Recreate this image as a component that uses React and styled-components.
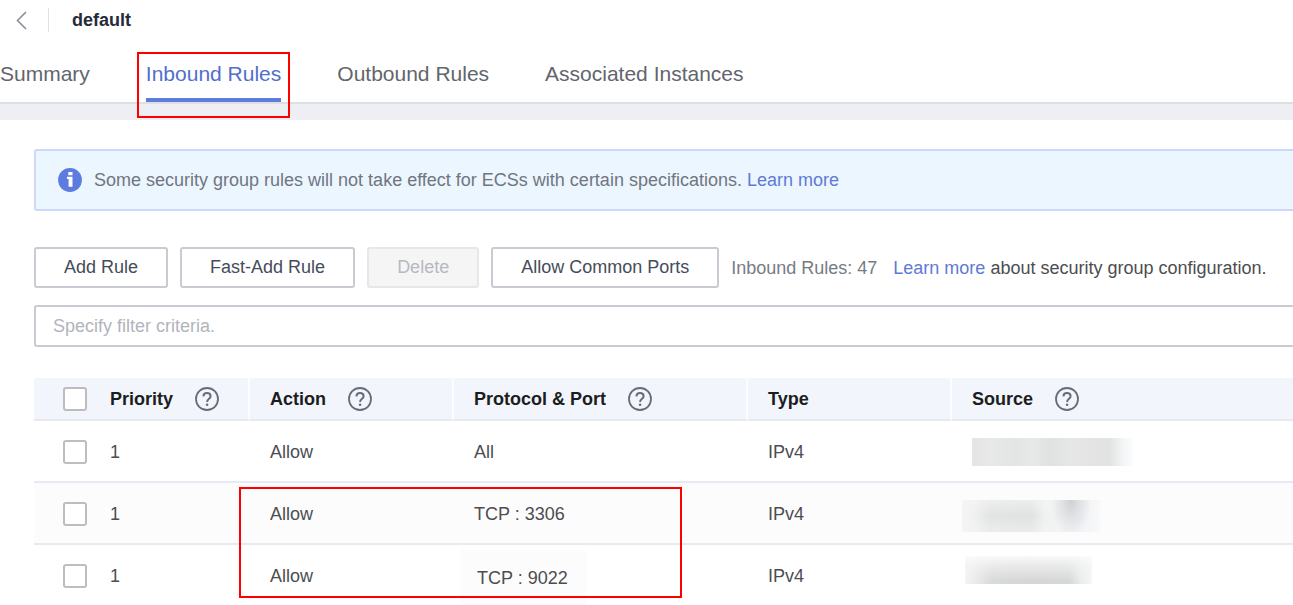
import React from "react";
import styled, { createGlobalStyle } from "styled-components";

const GlobalStyle = createGlobalStyle`
  * { box-sizing: border-box; }
  html, body, #root { height: 100%; }
  body {
    margin: 0;
    overflow: hidden;
    background: #fff;
    color: #4b4d52;
    font-family: "Liberation Sans", Arial, sans-serif;
    font-size: 18px;
    line-height: 24px;
  }
`;

const Page = styled.div`
  min-height: 100%;
  background: #fff;
`;

const TitleBar = styled.header`
  display: flex;
  align-items: center;
  height: 40px;
  padding-left: 16px;
`;

const BackButton = styled.button`
  display: flex;
  padding: 0;
  border: 0;
  background: none;
  color: #8a8e99;
`;

const Divider = styled.span`
  width: 1px;
  height: 24px;
  margin: 0 23px 0 20px;
  background: #dfe1e6;
`;

const Title = styled.h1`
  margin: 0;
  color: #252b3a;
  font-size: 18px;
  line-height: 24px;
`;

const Tabs = styled.nav`
  display: flex;
  gap: 56px;
  height: 64px;
  padding-top: 18px;
  border-bottom: 2px solid #dfdfe2;
`;

const Tab = styled.a`
  position: relative;
  height: 44px;
  padding-top: 4px;
  border-bottom: 4px solid ${(p) => (p.$active ? "#5e7ce0" : "transparent")};
  color: ${(p) => (p.$active ? "#526ecc" : "#62656d")};
  font-size: 21px;
  text-decoration: none;
  white-space: nowrap;
`;

const TabMarker = styled.span`
  position: absolute;
  inset: -6px -9px -20px;
  border: 2px solid #f00;
  pointer-events: none;
`;

const Band = styled.div`
  height: 16px;
  background: #eeeff4;
  border-bottom: 1px solid #f0f0f3;
`;

const Main = styled.main`
  padding: 29px 0 0 34px;
`;

const Notice = styled.div`
  display: flex;
  align-items: center;
  gap: 12px;
  height: 62px;
  padding-left: 22px;
  border: 2px solid #cbd8fa;
  border-right: 0;
  border-radius: 3px 0 0 3px;
  background: #ebf6ff;
  color: #71757f;
`;

const Link = styled.a`
  color: #6179d6;
  text-decoration: none;
`;

const Toolbar = styled.div`
  display: flex;
  align-items: center;
  gap: 12px;
  margin: 36px 0 17px;
  white-space: nowrap;
`;

const Button = styled.button`
  height: 41px;
  padding: 0 28px 2px;
  border: 2px solid #c9cbd2;
  border-radius: 3px;
  background: #fff;
  color: #464c59;
  font: inherit;

  &:disabled {
    border-color: #e6e7ea;
    background: #f5f5f5;
    color: #b6b9c1;
  }
`;

const Count = styled.span`
  margin-right: 4px;
  color: #777b84;
`;

const Filter = styled.input`
  display: block;
  width: 100%;
  height: 42px;
  padding: 0 17px;
  border: 2px solid #c9cbd2;
  border-right: 0;
  border-radius: 3px 0 0 3px;
  background: #fff;
  font: inherit;

  &::placeholder { color: #b1b4bd; opacity: 1; }
`;

const TableArea = styled.div`
  position: relative;
  margin-top: 31px;
`;

const Table = styled.table`
  width: 100%;
  table-layout: fixed;
  border-collapse: separate;
  border-spacing: 0;
`;

const Col = styled.col`
  width: ${(p) => (p.$w ? `${p.$w}px` : "auto")};
`;

const HeadCell = styled.th`
  height: 43px;
  padding: 0 0 0 20px;
  border-bottom: 2px solid #e7e9ee;
  border-right: ${(p) => (p.$divided ? "2px solid #fbfcff" : "0")};
  background: #f2f5fc;
  color: #1c1d21;
  text-align: left;
  white-space: nowrap;
`;

const HeadLabel = styled.span`
  display: flex;
  align-items: center;
  gap: 22px;
`;

const Row = styled.tr`
  background: ${(p) => (p.$shaded ? "#fcfcfc" : "#fff")};
`;

const Cell = styled.td`
  position: relative;
  height: 62px;
  padding: 2px 0 0 20px;
  border-bottom: 2px solid #e7eaf2;
`;

const CheckHead = styled(HeadCell)`
  padding-left: 29px;
  border-radius: 3px 0 0 0;
`;

const CheckCell = styled(Cell)`
  padding-left: 29px;
`;

const Checkbox = styled.input`
  display: block;
  appearance: none;
  width: 24px;
  height: 24px;
  margin: 0;
  border: 2px solid #bdbdbf;
  border-radius: 3px;
  background: #fff;
`;

const PortPatch = styled.span`
  position: absolute;
  left: 6px;
  top: 5px;
  width: 126px;
  height: 56px;
  padding: 16px 0 0 17px;
  background: #fcfcfc;
`;

const Mask = styled.span`
  position: absolute;
  left: ${(p) => p.$left}px;
  top: ${(p) => p.$top}px;
  width: ${(p) => p.$w}px;
  height: ${(p) => p.$h}px;
  background: ${(p) => p.$fill};
`;

const RowsMarker = styled.div`
  position: absolute;
  left: 205px;
  top: 109px;
  width: 443px;
  height: 111px;
  border: 2px solid #f00;
  pointer-events: none;
`;

const HelpIcon = () => (
  <svg width="24" height="24" viewBox="0 0 24 24" fill="none" stroke="#666d79" aria-hidden="true">
    <circle cx="12" cy="12" r="11" strokeWidth="1.8" />
    <path d="M8.4 9.4C8.5 7.3 9.9 6.1 12 6.1S15.6 7.3 15.6 9.2C15.6 11.7 12.1 11.9 12.1 14.9" strokeWidth="2" />
    <circle cx="12.1" cy="17.8" r="1.3" fill="#666d79" stroke="none" />
  </svg>
);

const InfoIcon = () => (
  <svg width="24" height="24" viewBox="0 0 24 24" aria-hidden="true">
    <circle cx="12" cy="12" r="11.9" fill="#5e7ce0" />
    <path d="M10.3 4H14.5V7.2H10.3ZM9 8.8H14.5V18.8H10.6V11H9Z" fill="#fff" />
  </svg>
);

const columns = [
  { label: "Priority", help: true, width: 160 },
  { label: "Action", help: true, width: 204 },
  { label: "Protocol & Port", help: true, width: 294 },
  { label: "Type", help: false, width: 204 },
  { label: "Source", help: true },
];

const rules = [
  {
    port: "All",
    mask: { $left: 20, $top: 17, $w: 161, $h: 28,
      $fill: "linear-gradient(90deg,#e5e5e3 0%,#e7e8e8 12%,#e3e4e4 27%,#e7e8e8 38%,#dfe2e1 49%,#e5e7e6 60%,#e4e4e3 73%,#e1e2e2 85%,#f3f5f6 94%,#fbfcfc 100%)" },
  },
  {
    port: "TCP : 3306",
    mask: { $left: 10, $top: 17, $w: 138, $h: 32,
      $fill: "radial-gradient(ellipse 20px 36px at 109px 0,#cfd0d4,rgba(216,217,221,.6) 50%,rgba(240,240,243,0)),linear-gradient(180deg,rgba(245,245,245,.6),rgba(245,245,245,0) 50%,rgba(245,245,245,.5)),linear-gradient(90deg,#f5f5f5 0,#f1f1f1 8%,#e2e4e3 20%,#dfe2e1 50%,#eff1f1 60%,#f2f2f3 70%,#eff0f3 85%,#f9fafb 100%)" },
  },
  {
    port: "TCP : 9022",
    patched: true,
    mask: { $left: 13, $top: 11, $w: 127, $h: 28,
      $fill: "linear-gradient(180deg,rgba(251,251,251,.95),rgba(245,245,245,.6) 35%,rgba(245,245,245,0) 90%),linear-gradient(90deg,#f4f4f2 0,#e2e3e2 14%,#d8dad9 22%,#d5d7d6 50%,#d6d8d7 82%,#eceeee 92%,#f5f7f7 100%)" },
  },
];

export default function App() {
  return (
    <Page>
      <GlobalStyle />
      <TitleBar>
        <BackButton aria-label="Back">
          <svg width="12" height="20" viewBox="0 0 12 20" fill="none" stroke="currentColor" strokeWidth="1.6">
            <path d="M10 2L1.5 10.5L10 19" />
          </svg>
        </BackButton>
        <Divider />
        <Title>default</Title>
      </TitleBar>
      <Tabs>
        <Tab href="#summary">Summary</Tab>
        <Tab href="#inbound" $active aria-current="page">
          Inbound Rules
          <TabMarker />
        </Tab>
        <Tab href="#outbound">Outbound Rules</Tab>
        <Tab href="#instances">Associated Instances</Tab>
      </Tabs>
      <Band />
      <Main>
        <Notice>
          <InfoIcon />
          <span>
            Some security group rules will not take effect for ECSs with certain specifications.{" "}
            <Link href="#specifications">Learn more</Link>
          </span>
        </Notice>
        <Toolbar>
          <Button>Add Rule</Button>
          <Button>Fast-Add Rule</Button>
          <Button disabled>Delete</Button>
          <Button>Allow Common Ports</Button>
          <Count>Inbound Rules: 47</Count>
          <span>
            <Link href="#configuration">Learn more</Link> about security group configuration.
          </span>
        </Toolbar>
        <Filter aria-label="Filter criteria" placeholder="Specify filter criteria." />
        <TableArea>
          <Table>
            <colgroup>
              <Col $w={56} />
              {columns.map((c) => <Col key={c.label} $w={c.width} />)}
            </colgroup>
            <thead>
              <tr>
                <CheckHead><Checkbox type="checkbox" aria-label="Select all rules" /></CheckHead>
                {columns.map((c) => (
                  <HeadCell key={c.label} $divided={Boolean(c.width)}>
                    <HeadLabel>{c.label}{c.help && <HelpIcon />}</HeadLabel>
                  </HeadCell>
                ))}
              </tr>
            </thead>
            <tbody>
              {rules.map((r, i) => (
                <Row key={r.port} $shaded={i % 2 === 1}>
                  <CheckCell><Checkbox type="checkbox" aria-label={`Select rule ${r.port}`} /></CheckCell>
                  <Cell>1</Cell>
                  <Cell>Allow</Cell>
                  <Cell>{r.patched ? <PortPatch>{r.port}</PortPatch> : r.port}</Cell>
                  <Cell>IPv4</Cell>
                  <Cell><Mask {...r.mask} /></Cell>
                </Row>
              ))}
            </tbody>
          </Table>
          <RowsMarker />
        </TableArea>
      </Main>
    </Page>
  );
}
